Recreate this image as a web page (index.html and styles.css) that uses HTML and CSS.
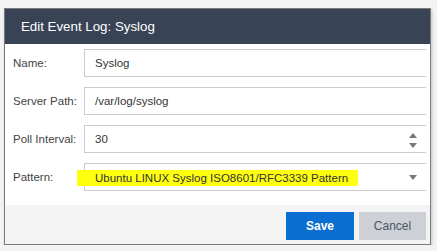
FILE: index.html
```html
<!DOCTYPE html>
<html lang="en">
<head>
  <meta charset="UTF-8">
  <title>Edit Event Log: Syslog</title>
  <link rel="stylesheet" href="styles.css">
</head>
<body>

  <div class="dialog">
    <div class="dialog-header">Edit Event Log: Syslog</div>

    <div class="dialog-body">
      <div class="row">
        <span class="label">Name:</span>
        <div class="field">Syslog</div>
      </div>
      <div class="row">
        <span class="label">Server Path:</span>
        <div class="field">/var/log/syslog</div>
      </div>
      <div class="row">
        <span class="label">Poll Interval:</span>
        <div class="field">
          30
          <span class="spinner">
            <span class="arrow-up"></span>
            <span class="arrow-down"></span>
          </span>
        </div>
      </div>
      <div class="row">
        <span class="label">Pattern:</span>
        <div class="field">
          <span class="marker">Ubuntu LINUX Syslog ISO8601/RFC3339 Pattern</span>
          <span class="caret arrow-down"></span>
        </div>
      </div>
    </div>

    <div class="dialog-footer">
      <button class="btn btn-save">Save</button>
      <button class="btn btn-cancel">Cancel</button>
    </div>
  </div>

</body>
</html>
```

FILE: styles.css
```css
* {
  margin: 0;
  padding: 0;
  box-sizing: border-box;
  font-family: "Liberation Sans", Arial, sans-serif;
}

body {
  background: #f3f3f3;
  padding: 8px 0 0 4px;
}

.dialog {
  width: 427px;
  height: 237px;
  background: #fff;
  border: 1px solid #7a7a7a;
  box-shadow: 1px 2px 3px rgba(0, 0, 0, 0.2);
  display: flex;
  flex-direction: column;
}

.dialog-header {
  height: 35px;
  background: #384456;
  color: #fff;
  font-size: 13.3px;
  padding-left: 16px;
  display: flex;
  align-items: center;
}

.dialog-body {
  flex: 1;
  padding: 5px 4px 0 8px;
  display: flex;
  flex-direction: column;
  gap: 10px;
}

.row {
  display: flex;
  align-items: center;
  height: 28px;
}

.label {
  width: 71px;
  font-size: 11.5px;
  color: #444;
  white-space: nowrap;
}

.field {
  flex: 1;
  height: 28px;
  border: 1px solid #ccc;
  border-right: none;
  padding-left: 10px;
  font-size: 11.5px;
  color: #333;
  display: flex;
  align-items: center;
  position: relative;
}

.spinner {
  position: absolute;
  right: 9px;
  top: 7px;
  display: flex;
  flex-direction: column;
  gap: 5px;
}

.arrow-up {
  width: 0;
  height: 0;
  border-left: 4px solid transparent;
  border-right: 4px solid transparent;
  border-bottom: 5px solid #777;
}

.arrow-down {
  width: 0;
  height: 0;
  border-left: 4px solid transparent;
  border-right: 4px solid transparent;
  border-top: 5px solid #777;
}

.caret {
  position: absolute;
  right: 9px;
  top: 11px;
}

/* yellow marker over the selected pattern */
.marker {
  background: #ffff10;
  margin-left: -18px;
  padding: 2px 10px 2px 18px;
  position: relative;
  top: 1px;
}

.dialog-footer {
  height: 39px;
  background: #f4f4f4;
  padding: 7px 4px 0 0;
  display: flex;
  justify-content: flex-end;
  gap: 5px;
}

.btn {
  height: 28px;
  border: none;
  font-size: 12px;
  cursor: pointer;
}

.btn-save {
  width: 68px;
  background: #0a6fd0;
  color: #fff;
  font-weight: bold;
}

.btn-cancel {
  width: 67px;
  background: #cdd0d4;
  color: #4b5563;
}
```
